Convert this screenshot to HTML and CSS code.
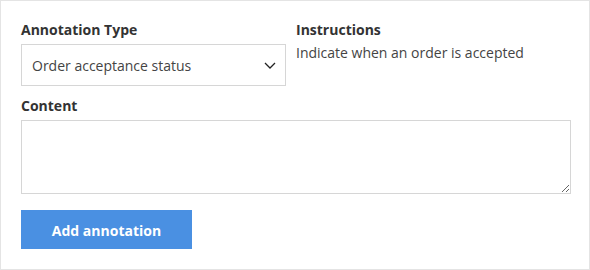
FILE: index.html
```html
<!DOCTYPE html>
<html>
<head>
<meta charset="utf-8">
<link rel="stylesheet" href="styles.css">
</head>
<body>
<form class="panel">
  <div class="top-row">
    <div class="field">
      <label class="label" for="type">Annotation Type</label>
      <div class="select-wrap">
        <select id="type" class="select">
          <option>Order acceptance status</option>
        </select>
        <svg class="chevron" width="12" height="7" viewBox="0 0 12 7"><path d="M1 1 L6 6 L11 1" fill="none" stroke="#222" stroke-width="1.3"/></svg>
      </div>
    </div>
    <div class="field">
      <div class="label">Instructions</div>
      <p class="instructions">Indicate when an order is accepted</p>
    </div>
  </div>
  <div class="field content-field">
    <label class="label" for="content">Content</label>
    <textarea id="content" class="textarea"></textarea>
  </div>
  <button type="button" class="btn">Add annotation</button>
</form>
</body>
</html>
```
FILE: styles.css
```css
html, body {
  margin: 0;
  padding: 0;
  background: #fff;
}
.panel {
  box-sizing: border-box;
  width: 590px;
  height: 270px;
  border: 1px solid #e4e4e4;
  padding: 20px;
  font-family: "Open Sans", "Liberation Sans", sans-serif;
  color: #333;
  display: flex;
  flex-direction: column;
  align-items: flex-start;
}
.top-row {
  display: grid;
  grid-template-columns: 265px 1fr;
  column-gap: 10px;
  width: 100%;
}
.field {
  display: flex;
  flex-direction: column;
}
.label {
  font-size: 14px;
  font-weight: 700;
  line-height: 18px;
  margin-bottom: 5px;
  color: #333;
}
.select-wrap {
  position: relative;
}
.select {
  appearance: none;
  -webkit-appearance: none;
  box-sizing: border-box;
  width: 265px;
  height: 42px;
  border: 1px solid #d6d6d6;
  border-radius: 0;
  background: #fff;
  padding: 0 10px;
  font-family: "Open Sans", "Liberation Sans", sans-serif;
  font-size: 14px;
  color: #444;
  margin: 0;
}
.chevron {
  position: absolute;
  right: 10px;
  top: 18px;
}
.instructions {
  margin: 0;
  font-size: 14px;
  line-height: 19px;
  color: #444;
  margin-top: -1px;
}
.content-field {
  width: 100%;
  margin-top: 11px;
}
.textarea {
  box-sizing: border-box;
  width: 550px;
  height: 74px;
  border: 1px solid #d6d6d6;
  border-radius: 0;
  margin: 0;
  font-family: "Open Sans", "Liberation Sans", sans-serif;
  font-size: 14px;
}
.btn {
  margin-top: 16px;
  width: 171px;
  height: 42px;
  border: none;
  border-radius: 0;
  background: #4a90e2;
  color: #fff;
  font-family: "Open Sans", "Liberation Sans", sans-serif;
  font-weight: 700;
  font-size: 14px;
  padding: 2px 0 0;
}
```
